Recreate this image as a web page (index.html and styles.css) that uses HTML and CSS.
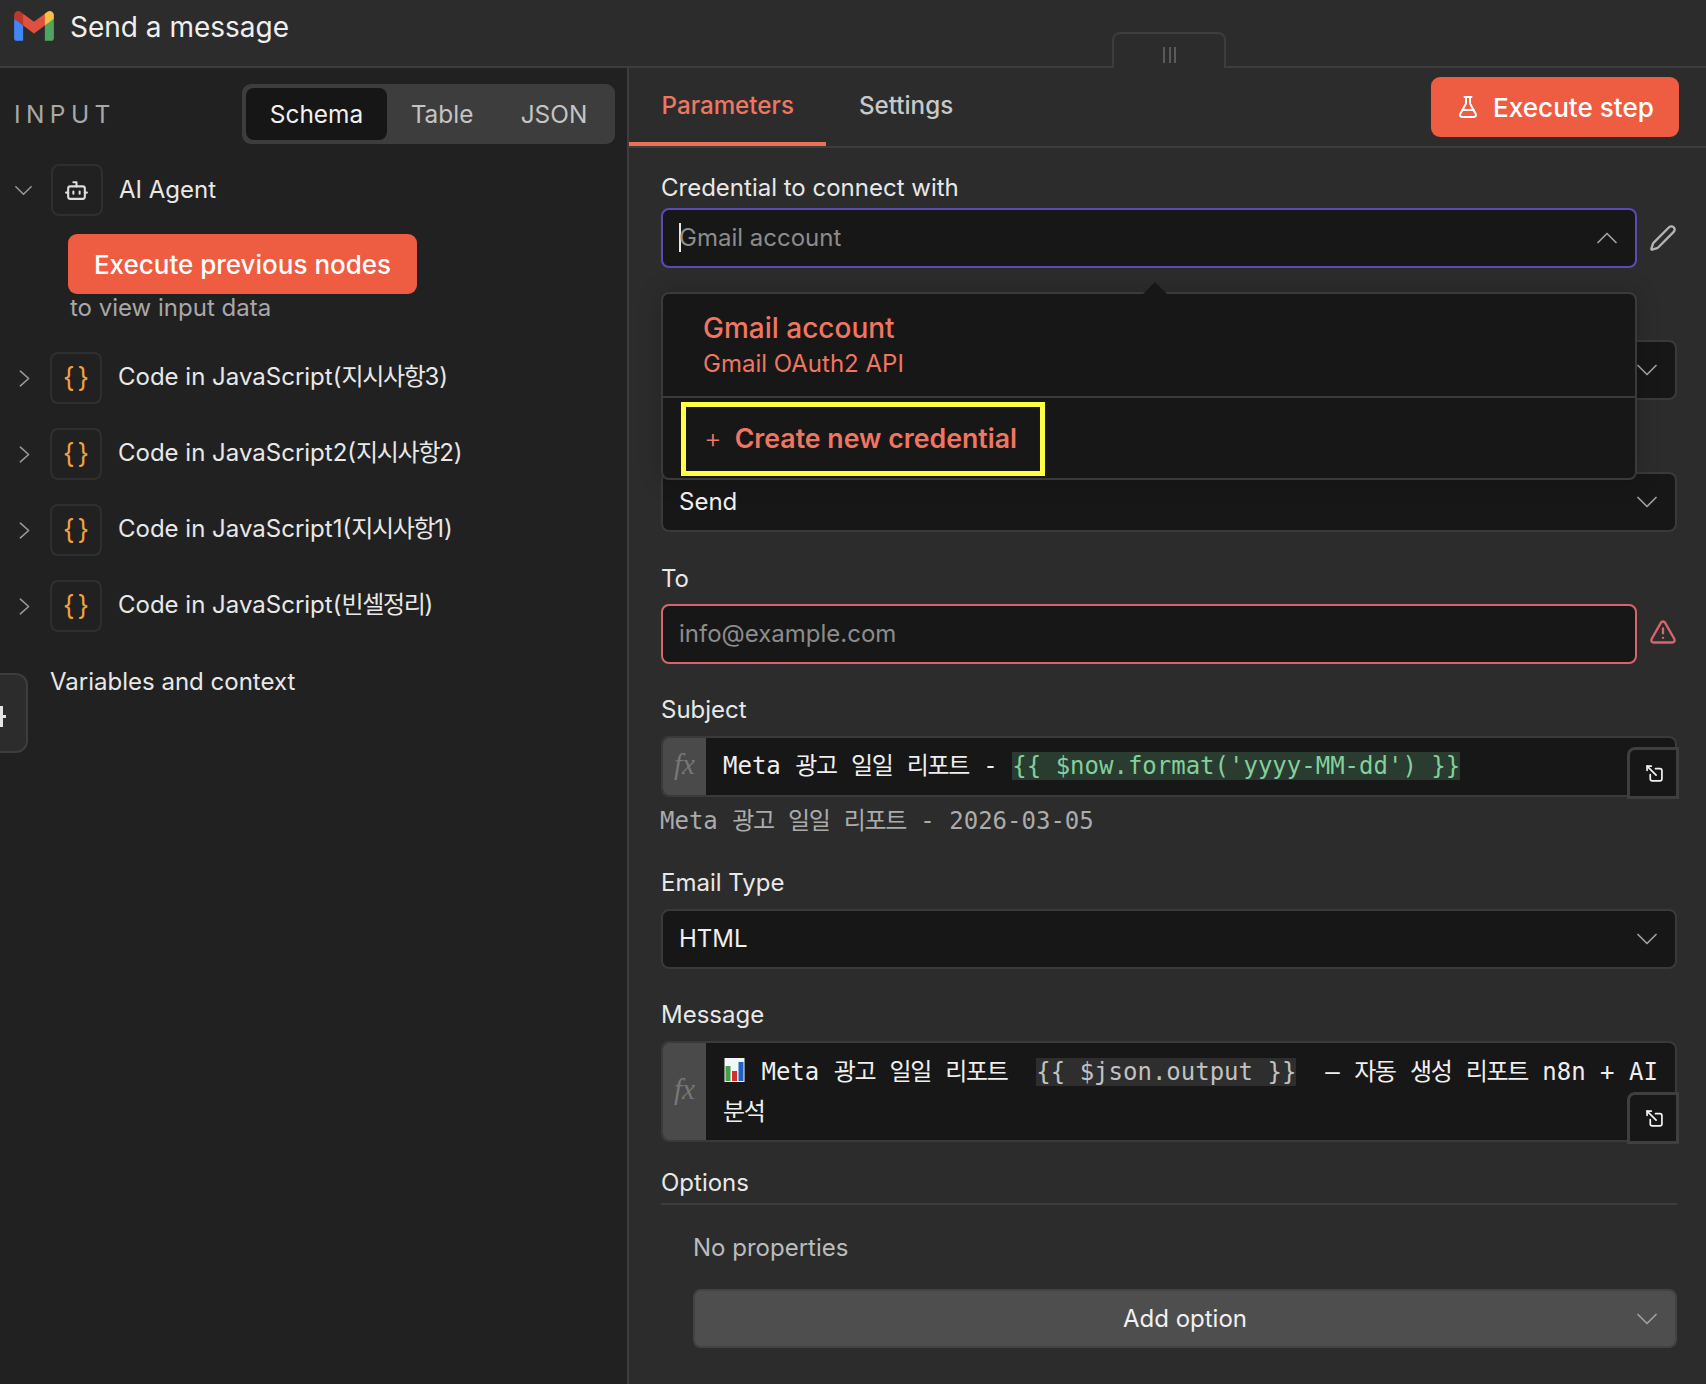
FILE: index.html
```html
<!DOCTYPE html>
<html lang="en">
<head>
<meta charset="utf-8">
<title>Send a message</title>
<link rel="stylesheet" href="styles.css">
</head>
<body>
<svg class="defs" width="0" height="0" aria-hidden="true">
  <symbol id="chev-down" viewBox="0 0 20 12"><path d="M1 1.5 10 10.5 19 1.5" fill="none" stroke="currentColor" stroke-width="1.7" stroke-linecap="round" stroke-linejoin="round"/></symbol>
  <symbol id="chev-up" viewBox="0 0 20 12"><path d="M1 10.5 10 1.5 19 10.5" fill="none" stroke="currentColor" stroke-width="1.7" stroke-linecap="round" stroke-linejoin="round"/></symbol>
  <symbol id="chev-right" viewBox="0 0 12 18"><path d="M1.5 1 10.5 9 1.5 17" fill="none" stroke="currentColor" stroke-width="1.7" stroke-linecap="round" stroke-linejoin="round"/></symbol>
  <symbol id="expand" viewBox="0 0 16 16"><g fill="none" stroke="currentColor" stroke-width="1.6" stroke-linecap="round" stroke-linejoin="round"><path d="M1 5V1h4"/><path d="M1 1l8.5 8.5"/><path d="M9 3.5h4a2 2 0 0 1 2 2V13a2 2 0 0 1-2 2H6a2 2 0 0 1-2-2V9"/></g></symbol>
</svg>
<div class="app">
  <header class="topbar">
    <svg class="gmail" viewBox="0 0 256 193" aria-hidden="true">
      <path fill="#4285F4" d="M58.182 192.05V93.14L27.507 65.077 0 49.504v125.091c0 9.658 7.825 17.455 17.455 17.455h40.727Z"/>
      <path fill="#4FA55F" d="M197.818 192.05h40.727c9.659 0 17.455-7.826 17.455-17.455V49.505l-31.156 17.837-27.026 25.798v98.91Z"/>
      <path fill="#E0503F" d="m58.182 93.14-4.174-38.647 4.174-36.989L128 69.868l69.818-52.364 4.669 34.992-4.669 40.644L128 145.504z"/>
      <path fill="#F6C143" d="M197.818 17.504V93.14L256 49.504V26.231c0-21.585-24.64-33.89-41.89-20.945l-16.292 12.218Z"/>
      <path fill="#B93A2B" d="m0 49.504 26.759 20.07L58.182 93.14V17.504L41.89 5.286C24.61-7.66 0 4.646 0 26.23v23.273Z"/>
    </svg>
    <span class="node-title">Send a message</span>
    <div class="handle"><span class="grip"></span></div>
  </header>

  <div class="main">
    <aside class="input-panel">
      <div class="input-head">
        <span class="input-title">INPUT</span>
        <div class="segment">
          <span class="seg seg-active">Schema</span>
          <span class="seg seg-table">Table</span>
          <span class="seg seg-json">JSON</span>
        </div>
      </div>

      <div class="tree-row tree-first">
        <svg class="chev-d"><use href="#chev-down"/></svg>
        <span class="node-box">
          <svg class="bot" viewBox="0 0 24 24" fill="none" stroke="currentColor" stroke-width="2" stroke-linecap="round" stroke-linejoin="round"><path d="M12 8V4H9"/><rect x="4" y="8" width="16" height="12" rx="2"/><path d="M2 14h2M20 14h2M15 13v2M9 13v2"/></svg>
        </span>
        <span class="tree-label">AI Agent</span>
      </div>
      <button class="btn-exec-prev">Execute previous nodes</button>
      <p class="hint">to view input data</p>

      <div class="tree-list">
        <div class="tree-row">
          <span class="chev-cell"><svg class="chev-r"><use href="#chev-right"/></svg></span>
          <span class="node-box"><span class="braces">{}</span></span>
          <span class="tree-label tree-label-ko">Code in JavaScript(<span class="ko">지시사항</span>3)</span>
        </div>
        <div class="tree-row">
          <span class="chev-cell"><svg class="chev-r"><use href="#chev-right"/></svg></span>
          <span class="node-box"><span class="braces">{}</span></span>
          <span class="tree-label tree-label-ko">Code in JavaScript2(<span class="ko">지시사항</span>2)</span>
        </div>
        <div class="tree-row">
          <span class="chev-cell"><svg class="chev-r"><use href="#chev-right"/></svg></span>
          <span class="node-box"><span class="braces">{}</span></span>
          <span class="tree-label tree-label-ko">Code in JavaScript1(<span class="ko">지시사항</span>1)</span>
        </div>
        <div class="tree-row">
          <span class="chev-cell"><svg class="chev-r"><use href="#chev-right"/></svg></span>
          <span class="node-box"><span class="braces">{}</span></span>
          <span class="tree-label tree-label-ko">Code in JavaScript(<span class="ko">빈셀정리</span>)</span>
        </div>
      </div>

      <div class="vars">Variables and context</div>
      <div class="side-tab"><span class="side-tab-mark"></span></div>
    </aside>

    <section class="params">
      <div class="tabs">
        <span class="tab tab-active">Parameters</span>
        <span class="tab">Settings</span>
        <button class="btn-exec">
          <svg class="flask" viewBox="0 0 24 24" fill="none" stroke="currentColor" stroke-width="2" stroke-linecap="round" stroke-linejoin="round"><path d="M14 2v6a2 2 0 0 0 .245.96l5.51 10.08A2 2 0 0 1 18 22H6a2 2 0 0 1-1.755-2.96l5.51-10.08A2 2 0 0 0 10 8V2"/><path d="M6.453 15h11.094"/><path d="M8.5 2h7"/></svg>
          Execute step
        </button>
      </div>

      <div class="form">
        <div class="cred-field">
          <label class="label label-tight">Credential to connect with</label>
          <div class="row">
            <div class="input input-focus">
              <span class="caret"></span><span class="placeholder">Gmail account</span>
              <svg class="chev-sel"><use href="#chev-up"/></svg>
            </div>
            <span class="side">
              <svg class="pen" viewBox="0 0 24 24" fill="none" stroke="currentColor" stroke-width="2" stroke-linecap="round" stroke-linejoin="round"><path d="M21.174 6.812a1 1 0 0 0-3.986-3.987L3.842 16.174a2 2 0 0 0-.5.83l-1.321 4.352a.5.5 0 0 0 .623.622l4.353-1.32a2 2 0 0 0 .83-.497z"/></svg>
            </span>
          </div>
          <div class="dropdown">
            <span class="dd-arrow"></span>
            <div class="dd-item">
              <div class="dd-name">Gmail account</div>
              <div class="dd-type">Gmail OAuth2 API</div>
            </div>
            <div class="dd-foot">
              <div class="dd-create">
                <span class="dd-plus">+</span>
                <span class="dd-create-text">Create new credential</span>
              </div>
            </div>
          </div>
        </div>

        <div class="input select sel-resource"><svg class="chev-sel"><use href="#chev-down"/></svg></div>
        <div class="input select sel-operation">
          <span>Send</span>
          <svg class="chev-sel"><use href="#chev-down"/></svg>
        </div>

        <label class="label gap-to">To</label>
        <div class="row">
          <div class="input input-error"><span class="placeholder">info@example.com</span></div>
          <span class="side">
            <svg class="warn" viewBox="0 0 24 24" fill="none" stroke="currentColor" stroke-width="2" stroke-linecap="round" stroke-linejoin="round"><path d="m21.73 18-8-14a2 2 0 0 0-3.48 0l-8 14A2 2 0 0 0 4 21h16a2 2 0 0 0 1.73-3"/><path d="M12 9v4"/><path d="M12 17h.01"/></svg>
          </span>
        </div>

        <label class="label gap-subject">Subject</label>
        <div class="expr">
          <span class="fx">fx</span>
          <div class="expr-text">Meta <span class="ko-m">광고 일일 리포트</span> - <span class="tok-ok">{{ $now.format('yyyy-MM-dd') }}</span></div>
          <span class="expand"><svg class="expand-ic"><use href="#expand"/></svg></span>
        </div>
        <div class="preview">Meta <span class="ko-m">광고 일일 리포트</span> - 2026-03-05</div>

        <label class="label gap-email">Email Type</label>
        <div class="input select">
          <span>HTML</span>
          <svg class="chev-sel"><use href="#chev-down"/></svg>
        </div>

        <label class="label gap-msg">Message</label>
        <div class="expr expr-multi">
          <span class="fx">fx</span>
          <div class="expr-text"><svg class="emoji" viewBox="0 0 20 24" aria-hidden="true"><rect width="20" height="24" fill="#f4f6f8"/><rect x="1" y="8" width="5" height="15" fill="#43a047"/><rect x="7.5" y="13" width="5" height="10" fill="#d32f2f"/><rect x="14" y="4" width="5" height="19" fill="#1e63c4"/></svg> Meta <span class="ko-m">광고 일일 리포트</span>  <span class="tok-plain">{{ $json.output }}</span>  — <span class="ko-m">자동 생성 리포트</span> n8n + AI<br><span class="ko-m">분석</span></div>
          <span class="expand"><svg class="expand-ic"><use href="#expand"/></svg></span>
        </div>

        <div class="label options-head">Options</div>
        <div class="options-body">
          <div class="no-props">No properties</div>
          <div class="add-option">
            <span>Add option</span>
            <svg class="chev-sel"><use href="#chev-down"/></svg>
          </div>
        </div>
      </div>
    </section>
  </div>
</div>
</body>
</html>
```

FILE: styles.css
```css
* { box-sizing: border-box; }
html, body { margin: 0; padding: 0; background: #2c2c2c; }
body {
  font-family: Inter, "Noto Sans CJK KR", sans-serif;
  font-size: 24px;
  color: #ececec;
}
.defs { position: absolute; }
.app { width: 1706px; height: 1384px; overflow: hidden; display: flex; flex-direction: column; }

/* top bar */
.topbar {
  position: relative;
  height: 68px;
  flex: none;
  display: flex;
  align-items: flex-start;
  gap: 16px;
  padding: 11px 0 0 14px;
  background: #2c2c2c;
  border-bottom: 2px solid #3d3d3d;
}
.gmail { width: 40px; height: 30px; display: block; }
.node-title { font-size: 28px; line-height: 32px; color: #efefef; }
.handle {
  position: absolute;
  left: 1112px;
  top: 32px;
  width: 114px;
  height: 36px;
  background: #2c2c2c;
  border: 2px solid #3d3d3d;
  border-bottom: 0;
  border-radius: 8px 8px 0 0;
  display: flex;
  justify-content: center;
  padding-top: 13px;
}
.grip { display: block; width: 13px; height: 16px; background: repeating-linear-gradient(90deg, #5a5a5a 0 2px, transparent 2px 5.5px); }

.main { flex: 1; display: flex; min-height: 0; }

/* input panel */
.input-panel {
  position: relative;
  width: 629px;
  flex: none;
  background: #212121;
  border-right: 2px solid #3d3d3d;
  padding: 16px 12px 0 14px;
}
.input-head { display: flex; align-items: center; justify-content: space-between; height: 60px; }
.input-title { font-size: 24.5px; letter-spacing: 5.4px; color: #a8a8a8; }
.segment {
  display: flex;
  align-items: center;
  width: 373px;
  height: 60px;
  padding: 4px;
  background: #3d3d3d;
  border-radius: 9px;
}
.seg { height: 52px; line-height: 52px; text-align: center; color: #c4c4c4; font-size: 24.4px; }
.seg-active { width: 141px; background: #161616; border-radius: 8px; color: #f0f0f0; }
.seg-table { width: 110px; }
.seg-json { width: 114px; }

.tree-row { display: flex; align-items: center; height: 52px; }
.tree-first { margin-top: 20px; }
.chev-d { width: 17px; height: 11px; margin: 0 19px 0 1px; color: #9a9a9a; }
.chev-cell { width: 36px; display: flex; padding-left: 5px; }
.chev-r { width: 11px; height: 17px; color: #9a9a9a; display: block; }
.node-box {
  width: 52px;
  height: 52px;
  flex: none;
  display: flex;
  align-items: center;
  justify-content: center;
  border: 2px solid #2f2f2f;
  border-radius: 8px;
}
.bot { width: 25px; height: 25px; color: #dedede; margin-left: -2px; }
.braces { font-size: 27px; line-height: 1; letter-spacing: 3px; margin-right: -3px; margin-bottom: 2px; color: #f2a03d; }
.tree-label { margin-left: 16px; line-height: 32px; color: #e8e8e8; white-space: nowrap; }
.tree-label-ko { padding-bottom: 3px; }
.ko { letter-spacing: -1.3px; }
.btn-exec-prev {
  display: block;
  margin: 18px 0 0 54px;
  width: 349px;
  height: 60px;
  padding: 0;
  border: 0;
  border-radius: 9px;
  background: #ee5c42;
  color: #fff;
  font: 500 26px Inter, sans-serif;
}
.hint { margin: 0 0 0 56px; line-height: 28px; color: #a8a8a8; }
.tree-list { margin-top: 30px; display: flex; flex-direction: column; gap: 24px; }
.vars { margin: 34px 0 0 36px; line-height: 32px; color: #e8e8e8; }
.side-tab {
  position: absolute;
  left: -14px;
  top: 605px;
  width: 42px;
  height: 80px;
  background: #2c2c2c;
  border: 2px solid #3d3d3d;
  border-radius: 12px;
}
.side-tab-mark {
  position: absolute;
  left: 12px;
  top: 31px;
  width: 6px;
  height: 21px;
  background:
    linear-gradient(#e4e4e4, #e4e4e4) 0 0 / 3px 100% no-repeat,
    linear-gradient(#e4e4e4, #e4e4e4) 0 50% / 6px 3px no-repeat;
}

/* parameters */
.params { flex: 1; min-width: 0; background: #2c2c2c; }
.tabs {
  display: flex;
  align-items: center;
  height: 80px;
  border-bottom: 2px solid #3d3d3d;
  padding-right: 27px;
}
.tab {
  height: 78px;
  line-height: 75px;
  padding: 0 32.5px;
  font-size: 24.2px;
  font-weight: 500;
  color: #c8c8c8;
  border-bottom: 4px solid transparent;
}
.tab-active { color: #ef7660; border-bottom-color: #ee7056; }
.btn-exec {
  margin-left: auto;
  width: 248px;
  height: 60px;
  display: flex;
  align-items: center;
  justify-content: center;
  gap: 13px;
  padding: 0;
  border: 0;
  border-radius: 9px;
  background: #ee5c42;
  color: #fff;
  font: 500 26.1px Inter, sans-serif;
}
.flask { width: 24px; height: 24px; }

.form { padding: 24px 29px 0 32px; }
.label { display: block; line-height: 32px; margin-bottom: 10px; color: #e8e8e8; }
.label-tight { margin-bottom: 4px; }
.gap-to { margin-top: 31px; margin-bottom: 9px; }
.gap-subject { margin-top: 30px; }
.gap-email { margin-top: 30px; }
.gap-msg { margin-top: 30px; }

.cred-field { position: relative; }
.row { display: flex; align-items: center; }
.side { width: 40px; flex: none; display: flex; justify-content: flex-end; }
.input {
  position: relative;
  flex: 1;
  min-width: 0;
  height: 60px;
  display: flex;
  align-items: center;
  padding: 0 16px 1px;
  background: #171717;
  border: 2px solid #3a3a3a;
  border-radius: 8px;
  color: #f0f0f0;
}
.input-focus { border-color: #5a4bb8; }
.input-error { border-color: #d9646e; }
.placeholder { color: #8c8c8c; }
.caret { width: 2px; height: 29px; background: #e8e8e8; margin-right: -2px; }
.chev-sel { position: absolute; right: 18px; top: 50%; width: 20px; height: 12px; margin-top: -6px; color: #a0a0a0; }
.pen { width: 28px; height: 28px; color: #b4b4b4; }
.warn { width: 28px; height: 28px; margin-bottom: 4px; color: #d9646e; }
.sel-resource { margin-top: 72px; }
.sel-operation { margin-top: 72px; }

.dropdown {
  position: absolute;
  left: 0;
  top: 120px;
  width: 976px;
  height: 188px;
  background: #171717;
  border: 2px solid #3a3a3a;
  border-radius: 8px;
  box-shadow: 0 0 24px rgba(0, 0, 0, 0.18);
  z-index: 2;
}
.dd-arrow {
  position: absolute;
  left: 480px;
  top: -12px;
  width: 0;
  height: 0;
  border-left: 12px solid transparent;
  border-right: 12px solid transparent;
  border-bottom: 12px solid #171717;
}
.dd-item { height: 104px; padding: 17px 0 0 40px; border-bottom: 2px solid #3a3a3a; color: #ef7660; }
.dd-name { font-size: 28px; font-weight: 500; line-height: 35px; }
.dd-type { line-height: 36px; }
.dd-foot { padding: 4px 0 0 18px; }
.dd-create {
  width: 364px;
  height: 74px;
  display: flex;
  align-items: center;
  padding-left: 18px;
  padding-bottom: 2px;
  gap: 13px;
  border: 5px solid #ffff44;
  color: #ef7660;
}
.dd-plus { font-size: 27px; font-weight: 300; line-height: 1; }
.dd-create-text { font-size: 26.7px; font-weight: 600; white-space: nowrap; }

.expr {
  position: relative;
  display: flex;
  background: #171717;
  border: 2px solid #3a3a3a;
  border-radius: 8px;
  min-height: 61px;
}
.fx {
  width: 43px;
  flex: none;
  display: flex;
  align-items: center;
  justify-content: center;
  padding-bottom: 5px;
  background: #4a4a4a;
  border-radius: 6px 0 0 6px;
  font: italic 29px "Liberation Serif", serif;
  color: #777;
}
.expr-text {
  flex: 1;
  padding: 9px 0 9px 17px;
  font: 24px/39px "DejaVu Sans Mono", "Noto Sans CJK KR", monospace;
  color: #efefef;
  white-space: pre-wrap;
}
.expr-multi .expr-text { line-height: 40px; padding-top: 9px; padding-bottom: 8px; }
.ko-m { letter-spacing: -1.4px; word-spacing: 1.4px; }
.tok-ok { background: #2a3b2f; color: #82d09c; }
.tok-plain { background: #2e2e2e; color: #c2c2c2; }
.emoji { width: 21px; height: 24px; margin: 0 2px 0 1px; vertical-align: -2px; }
.expand {
  position: absolute;
  right: -4px;
  bottom: -4px;
  width: 52px;
  height: 52px;
  display: flex;
  align-items: center;
  justify-content: center;
  padding-left: 2px;
  background: #171717;
  border: 3px solid #3f3f3f;
  border-radius: 8px 0 0 0;
}
.expand-ic { width: 17px; height: 17px; color: #f2f2f2; }
.preview {
  margin: 8px 0 0 -1px;
  font: 24px/32px "DejaVu Sans Mono", "Noto Sans CJK KR", monospace;
  color: #ababab;
  white-space: pre-wrap;
}
.options-head { margin: 25px 0 0; padding-bottom: 4px; border-bottom: 2px solid #3d3d3d; }
.options-body { padding-left: 32px; }
.no-props { margin-top: 27px; line-height: 32px; color: #bcbcbc; }
.add-option {
  position: relative;
  height: 59px;
  margin-top: 25px;
  display: flex;
  align-items: center;
  justify-content: center;
  background: #4e4e4e;
  border: 2px solid #434343;
  border-radius: 8px;
  color: #f0f0f0;
}
```
